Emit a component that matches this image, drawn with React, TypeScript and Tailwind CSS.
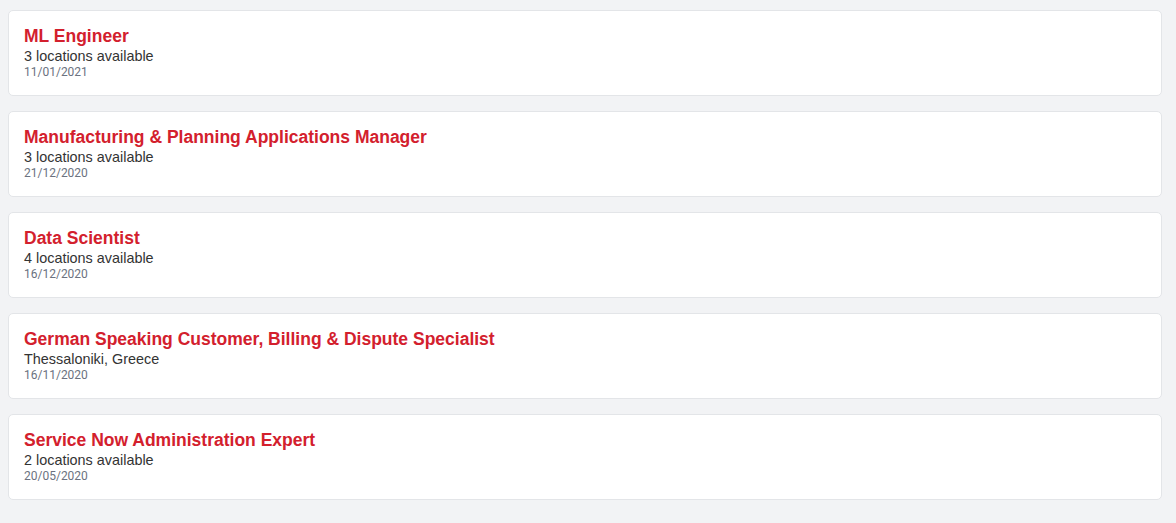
const jobs = [
  { title: 'ML Engineer', location: '3 locations available', date: '11/01/2021' },
  { title: 'Manufacturing & Planning Applications Manager', location: '3 locations available', date: '21/12/2020' },
  { title: 'Data Scientist', location: '4 locations available', date: '16/12/2020' },
  { title: 'German Speaking Customer, Billing & Dispute Specialist', location: 'Thessaloniki, Greece', date: '16/11/2020' },
  { title: 'Service Now Administration Expert', location: '2 locations available', date: '20/05/2020' },
];

export default function App() {
  return (
    <div className="min-h-screen bg-[#f2f3f5] pt-[10px] pl-2 pr-[14px] pb-6 font-['Liberation_Sans',Arial,sans-serif]">
      <div className="flex flex-col gap-[15px]">
        {jobs.map((job) => (
          <div
            key={job.date + job.title}
            className="bg-white border border-[#e3e5e8] rounded-[5px] px-[15px] pt-[15px] h-[86px]"
          >
            <h2 className="text-[17.5px] leading-[21px] font-bold text-[#d3202d]">{job.title}</h2>
            <p className="text-[14.4px] leading-[18px] text-[#333333]">{job.location}</p>
            <p className="font-['Roboto',sans-serif] text-[12px] leading-[15px] text-[#6b7280]">{job.date}</p>
          </div>
        ))}
      </div>
    </div>
  );
}
